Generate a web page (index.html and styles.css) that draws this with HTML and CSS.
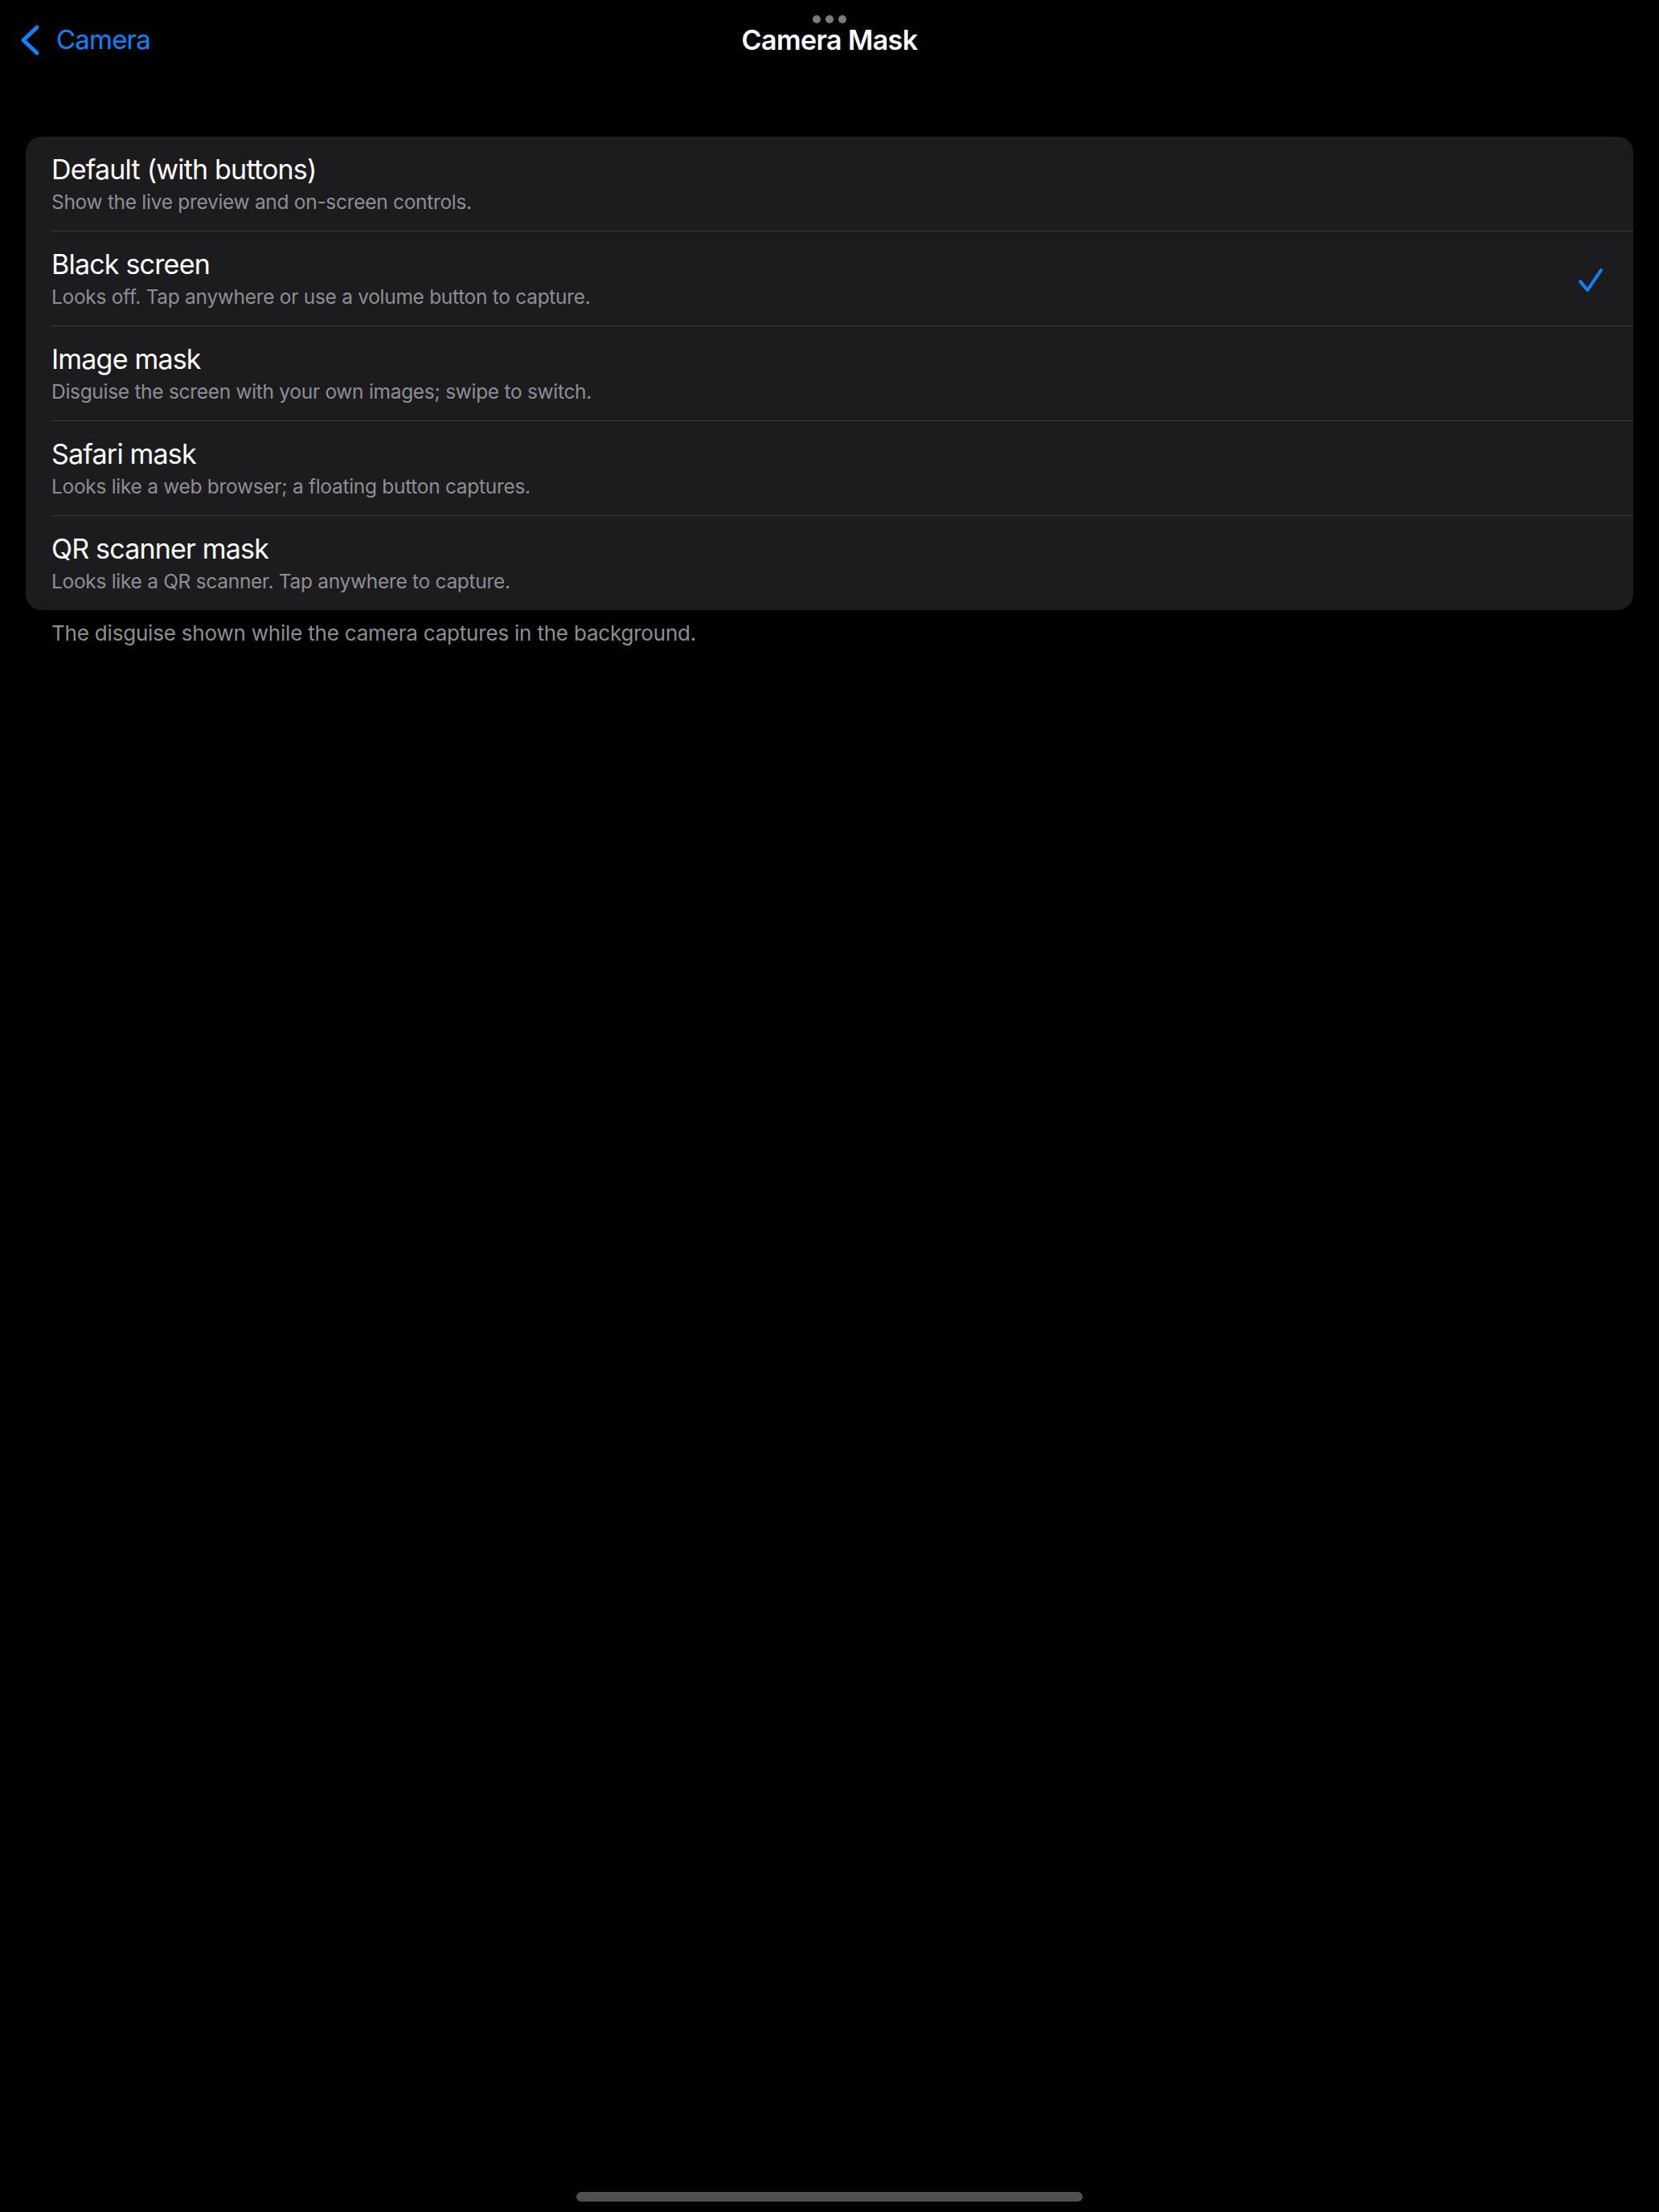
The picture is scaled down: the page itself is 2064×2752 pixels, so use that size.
FILE: index.html
```html
<!DOCTYPE html>
<html lang="en">
<head>
    <meta charset="UTF-8">
    <meta name="viewport" content="width=device-width, initial-scale=1.0">
    <title>Camera Mask</title>
    <link rel="stylesheet" href="styles.css">
</head>
<body>
    <div class="window-dots">
        <span></span><span></span><span></span>
    </div>

    <div class="nav">
        <a class="back" href="#">
            <svg class="chevron" width="26" height="40" viewBox="0 0 26 40">
                <path d="M22 4 L5 20 L22 36" fill="none" stroke="#0a84ff" stroke-width="5" stroke-linecap="round" stroke-linejoin="round"/>
            </svg>
            <span>Camera</span>
        </a>
        <h1 class="title">Camera Mask</h1>
        <div></div>
    </div>

    <div class="list">
        <div class="row">
            <div class="row-text">
                <div class="row-title">Default (with buttons)</div>
                <div class="row-sub">Show the live preview and on-screen controls.</div>
            </div>
        </div>
        <div class="row">
            <div class="row-text">
                <div class="row-title">Black screen</div>
                <div class="row-sub">Looks off. Tap anywhere or use a volume button to capture.</div>
            </div>
            <svg class="check" width="34" height="34" viewBox="0 0 34 34">
                <path d="M4 18 L13 29 L30 4" fill="none" stroke="#0a84ff" stroke-width="4" stroke-linecap="round" stroke-linejoin="round"/>
            </svg>
        </div>
        <div class="row">
            <div class="row-text">
                <div class="row-title">Image mask</div>
                <div class="row-sub">Disguise the screen with your own images; swipe to switch.</div>
            </div>
        </div>
        <div class="row">
            <div class="row-text">
                <div class="row-title">Safari mask</div>
                <div class="row-sub">Looks like a web browser; a floating button captures.</div>
            </div>
        </div>
        <div class="row">
            <div class="row-text">
                <div class="row-title">QR scanner mask</div>
                <div class="row-sub">Looks like a QR scanner. Tap anywhere to capture.</div>
            </div>
        </div>
    </div>

    <p class="footer">The disguise shown while the camera captures in the background.</p>

    <div class="home-bar"></div>
</body>
</html>
```

FILE: styles.css
```css
* { margin: 0; padding: 0; box-sizing: border-box; }
html, body { background: #000; }
body { font-family: Inter, "Noto Sans", sans-serif; color: #fff; min-height: 2752px; }

/* window handle at the top */
.window-dots { position: absolute; top: 19px; left: 50%; transform: translateX(-50%); display: flex; gap: 6px; }
.window-dots span { width: 10px; height: 10px; border-radius: 50%; background: #7c7c7c; }

.nav { display: grid; grid-template-columns: 1fr auto 1fr; align-items: center; padding: 29px 24px 0; height: 70px; }
.back { display: flex; align-items: center; gap: 20px; color: #0a84ff; text-decoration: none; font-size: 33px; line-height: 41px; letter-spacing: -0.8px; }
.chevron { display: block; }
.title { font-size: 34px; line-height: 41px; font-weight: 600; letter-spacing: -0.6px; text-align: center; }

.list { margin: 100px 32px 0; background: #1c1c1e; border-radius: 20px; overflow: hidden; }
.row { display: flex; align-items: center; justify-content: space-between; margin-left: 32px; padding: 20px 36px 20px 0; border-bottom: 1px solid #38383a; }
.row:last-child { border-bottom: none; }
.row-title { font-size: 34px; line-height: 41px; letter-spacing: -0.8px; }
.row-sub { margin-top: 4px; font-size: 24.5px; line-height: 32px; color: #8e8e93; letter-spacing: -0.3px; }
.check { display: block; margin-top: 4px; }

.footer { margin: 13px 0 0 64px; font-size: 26px; line-height: 32px; color: #8e8e93; letter-spacing: -0.2px; }

.home-bar { position: fixed; left: 50%; bottom: 13px; transform: translateX(-50%); width: 630px; height: 12px; border-radius: 6px; background: #505050; }
```
